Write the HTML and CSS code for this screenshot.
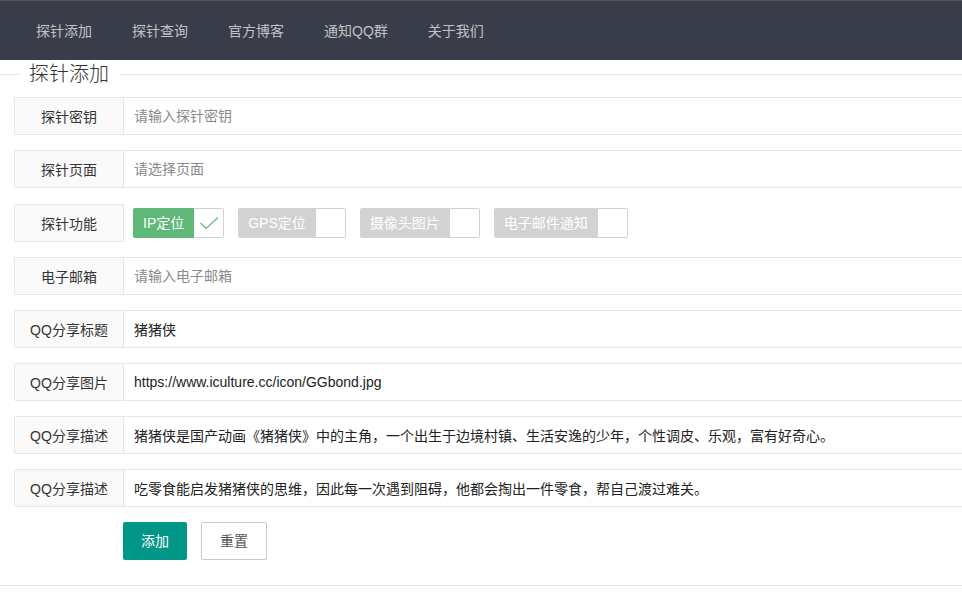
FILE: index.html
```html
<!DOCTYPE html>
<html lang="zh-CN">
<head>
<meta charset="utf-8">
<title>探针添加</title>
<link rel="stylesheet" href="styles.css">
</head>
<body>
<header class="header">
  <ul class="nav">
    <li class="nav-item">探针添加</li>
    <li class="nav-item">探针查询</li>
    <li class="nav-item">官方博客</li>
    <li class="nav-item">通知QQ群</li>
    <li class="nav-item">关于我们</li>
  </ul>
</header>
<fieldset class="field-title">
  <legend class="legend">探针添加</legend>
  <form class="form">
    <div class="form-item">
      <label class="form-label">探针密钥</label>
      <div class="input-block"><input class="input" type="text" placeholder="请输入探针密钥"></div>
    </div>
    <div class="form-item form-item-select">
      <label class="form-label">探针页面</label>
      <div class="input-block"><input class="input" type="text" readonly placeholder="请选择页面"></div>
    </div>
    <div class="form-item">
      <label class="form-label">探针功能</label>
      <div class="check-block">
        <div class="checkbox checked"><span class="check-text">IP定位</span><i class="check-icon"><svg width="30" height="28" viewBox="0 0 30 28"><polyline points="6.5,14 12,19.5 24,8.5" fill="none" stroke="#5FB878" stroke-width="1.2"/></svg></i></div>
        <div class="checkbox"><span class="check-text">GPS定位</span><i class="check-icon"></i></div>
        <div class="checkbox"><span class="check-text">摄像头图片</span><i class="check-icon"></i></div>
        <div class="checkbox"><span class="check-text">电子邮件通知</span><i class="check-icon"></i></div>
      </div>
    </div>
    <div class="form-item">
      <label class="form-label">电子邮箱</label>
      <div class="input-block"><input class="input" type="text" placeholder="请输入电子邮箱"></div>
    </div>
    <div class="form-item">
      <label class="form-label">QQ分享标题</label>
      <div class="input-block"><input class="input" type="text" value="猪猪侠"></div>
    </div>
    <div class="form-item">
      <label class="form-label">QQ分享图片</label>
      <div class="input-block"><input class="input" type="text" value="https://www.iculture.cc/icon/GGbond.jpg"></div>
    </div>
    <div class="form-item">
      <label class="form-label">QQ分享描述</label>
      <div class="input-block"><input class="input" type="text" value="猪猪侠是国产动画《猪猪侠》中的主角，一个出生于边境村镇、生活安逸的少年，个性调皮、乐观，富有好奇心。"></div>
    </div>
    <div class="form-item">
      <label class="form-label">QQ分享描述</label>
      <div class="input-block"><input class="input" type="text" value="吃零食能启发猪猪侠的思维，因此每一次遇到阻碍，他都会掏出一件零食，帮自己渡过难关。"></div>
    </div>
    <div class="btn-row">
      <button class="btn" type="button">添加</button>
      <button class="btn btn-primary" type="reset">重置</button>
    </div>
  </form>
</fieldset>
<div class="footer-line"></div>
</body>
</html>
```
FILE: styles.css
```css
* { box-sizing: border-box; }
html, body {
  margin: 0;
  padding: 0;
  overflow: hidden;
}
body {
  font-family: "Liberation Sans", "Noto Sans CJK SC", sans-serif;
  font-size: 14px;
  color: #333;
  background: #fff;
}
.header {
  height: 60px;
  background: #393D49;
  border-top: 1px solid #50535d;
}
.nav {
  list-style: none;
  margin: 0;
  padding: 0 0 0 16px;
  display: flex;
}
.nav-item {
  padding: 0 20px;
  line-height: 60px;
  height: 59px;
  color: rgba(255, 255, 255, 0.7);
  font-size: 14px;
}
.field-title {
  margin: 0;
  padding: 0;
  border: none;
  border-top: 1px solid #e6e6e6;
  min-width: 0;
}
.legend {
  margin-left: 19px;
  padding: 0 10px;
  font-size: 20px;
  font-weight: 300;
  line-height: 28px;
  color: #333;
}
.form {
  padding: 9px 0 0 14px;
  margin-right: -40px;
}
.form-item {
  display: flex;
  height: 38px;
  margin-bottom: 15px;
}
.form-item-select {
  margin-bottom: 16px;
}
.form-label {
  flex: 0 0 110px;
  width: 110px;
  height: 38px;
  border: 1px solid #e6e6e6;
  border-radius: 2px 0 0 2px;
  background: #FAFAFA;
  display: flex;
  align-items: center;
  justify-content: center;
  white-space: nowrap;
  color: #333;
  font-size: 14px;
}
.input-block {
  flex: 1;
  margin-left: -1px;
}
.input {
  display: block;
  width: 100%;
  height: 38px;
  border: 1px solid #e6e6e6;
  border-radius: 0 2px 2px 0;
  padding: 0 10px;
  font-family: inherit;
  font-size: 14px;
  color: #222;
  background: #fff;
  outline: none;
}
.input::placeholder {
  color: #8a8a8a;
}
.check-block {
  display: flex;
  align-items: center;
  gap: 14px;
  margin-left: 9px;
  height: 38px;
}
.checkbox {
  display: flex;
  height: 30px;
}
.check-text {
  display: block;
  padding: 0 10px;
  height: 30px;
  line-height: 30px;
  font-size: 14px;
  color: #fff;
  background: #d2d2d2;
  border-radius: 2px 0 0 2px;
  white-space: nowrap;
}
.check-icon {
  display: block;
  width: 30px;
  height: 30px;
  border: 1px solid #d2d2d2;
  border-left: none;
  border-radius: 0 2px 2px 0;
  background: #fff;
}
.check-icon svg { display: block; }
.checked .check-text {
  background: #5FB878;
}
.btn-row {
  display: flex;
  gap: 14px;
  padding-left: 109px;
  margin-bottom: 25px;
}
.btn {
  height: 38px;
  line-height: 38px;
  padding: 0 18px;
  border: none;
  border-radius: 2px;
  background: #009688;
  color: #fff;
  font-family: inherit;
  font-size: 14px;
  cursor: pointer;
}
.btn-primary {
  background: #fff;
  color: #555;
  border: 1px solid #C9C9C9;
  line-height: 36px;
}
.footer-line {
  border-top: 1px solid #e6e6e6;
}
```
